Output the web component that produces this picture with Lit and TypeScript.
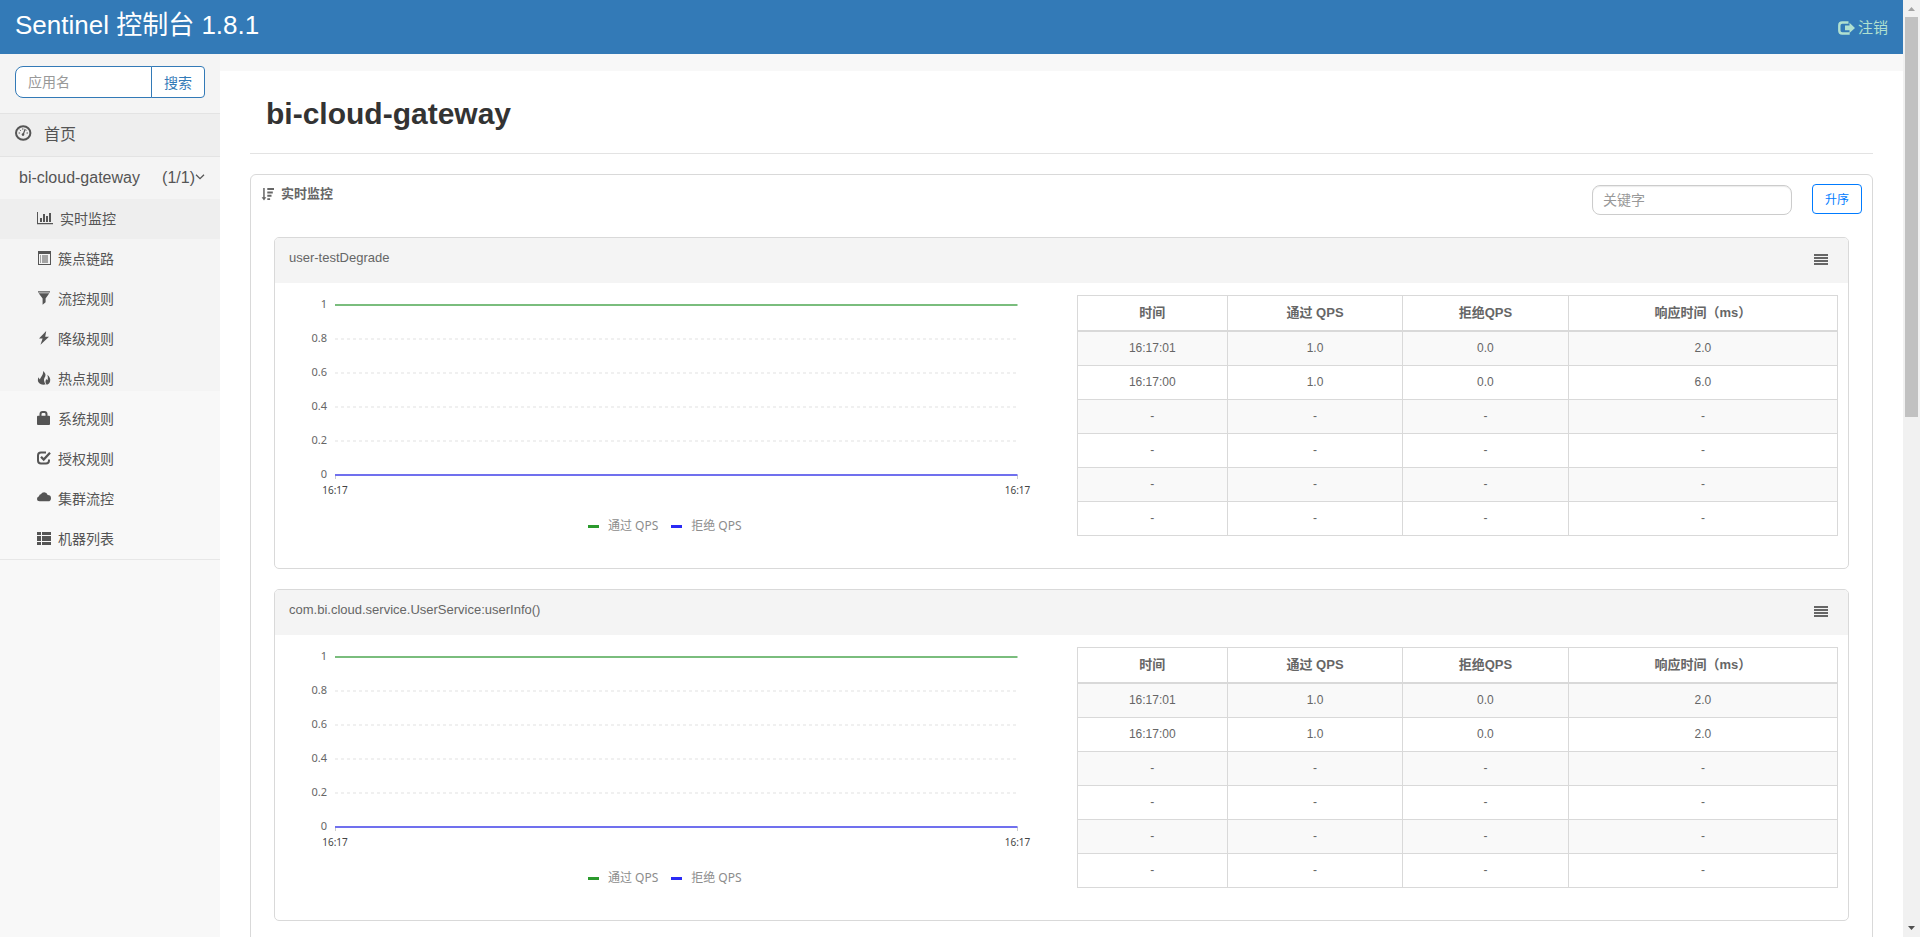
import { LitElement, html, svg, css } from "lit";
import { customElement, property } from "lit/decorators.js";
import { classMap } from "lit/directives/class-map.js";

interface Metric {
  time: string;
  pass: string;
  block: string;
  rt: string;
}

interface Resource {
  name: string;
  rows: Metric[];
}

const icons: Record<string, unknown> = {
  dashboard: html`<svg width="17" height="16" viewBox="0 0 17 16" fill="none" stroke="currentColor">
    <ellipse cx="8.2" cy="8" rx="7.2" ry="6.7" stroke-width="2"></ellipse>
    <path d="M8.300 9.200L10.200 4" stroke-width="1.200"></path>
    <circle cx="8" cy="9.600" r="1.300" fill="currentColor" stroke="none"></circle>
    <path d="M3.600 8h1.500M11.500 8h1.500M4.800 4.800l1 1M7.800 3.300v1.400M11.800 4.800l-.7.8" stroke-width="1"></path>
  </svg>`,
  stats: html`<svg width="16" height="13" viewBox="0 0 16 13" fill="currentColor">
    <path d="M0 0h1v11h15v1.200H0zM3 6h2v4H3zM6 2h2v8H6zM9 4h2v6H9zM12 1h2v9h-2z"></path>
  </svg>`,
  listAlt: html`<svg width="14" height="14" viewBox="0 0 14 14" fill="currentColor">
    <path fill-rule="evenodd" d="M1 0h13v14H1zM2 3v10h11V3z"></path>
    <path d="M3 4.500h1v1H3zM5 4.500h6v1H5zM3 6.500h1v1H3zM5 6.500h6v1H5zM3 8.500h1v1H3zM5 8.500h6v1H5zM3 10.500h1v1H3zM5 10.500h6v1H5z"></path>
  </svg>`,
  filter: html`<svg width="14" height="14" viewBox="0 0 14 14" fill="currentColor">
    <path d="M1 .3h12v1.200H1zM1.700 2.300h10.600L8.600 7.400v3.900l-3 2.500V7.400z"></path>
  </svg>`,
  flash: html`<svg width="14" height="14" viewBox="0 0 14 14" fill="currentColor">
    <path d="M9.200 0L2 7.400h3.600L3.500 13.800 12 5.800H8.200z"></path>
  </svg>`,
  fire: html`<svg width="14" height="14" viewBox="0 0 14 14" fill="currentColor">
    <path d="M6 0c2 1.600 3 3.400 2.300 5.200-.6 1.600-1.700 2.700-1.200 4.500.3 1.400.7 2.500 1.500 3.800C5 14 2.700 13.200 1.500 11.300.6 9.800.8 8 1.500 6.200c.3 1 .8 1.800 1.500 2.300C3.400 6 6.800 3.800 6 0z"></path>
    <path d="M10.300 3.800c2.500 2 3.400 4.200 2.800 6.400-.4 1.700-1.500 2.900-3.300 3.600-1.200-1.300-1.600-2.700-1.200-4 .2-.7.500-1.200.9-1.800.2.700.6 1.100 1 1.300.5-1.700.5-3.500-.2-5.500z"></path>
  </svg>`,
  lock: html`<svg width="14" height="14" viewBox="0 0 14 14" fill="currentColor">
    <path fill-rule="evenodd" d="M2.500 4.800V3C2.500 1.200 3.700 0 5.500 0h2C9.300 0 10.500 1.200 10.500 3v1.800H12q1 0 1 1V13q0 1-1 1H1q-1 0-1-1V5.800q0-1 1-1zM4.500 4.800h4V3.200Q8.500 2 7.300 2H5.700Q4.500 2 4.500 3.200z"></path>
  </svg>`,
  check: html`<svg width="14" height="14" viewBox="0 0 14 14" fill="none" stroke="currentColor" stroke-width="2">
    <path d="M9 1.500H4Q1 1.500 1 4.500V9.500Q1 12.500 4 12.500H9Q12 12.500 12 9.500V8.500"></path>
    <path d="M4 5.800l2.700 2.700L13 1.800" stroke-width="2.300"></path>
  </svg>`,
  cloud: html`<svg width="14" height="14" viewBox="0 0 14 14" fill="currentColor">
    <path d="M2.700 10.300Q0 10.300 0 7.800 0 5.800 2 5.200 2.200 3.400 3.800 3.300 5 1.200 7.200 1.200 9.800 1.200 10.700 4 14 4 14 7.200 14 10.300 11 10.300z"></path>
  </svg>`,
  thList: html`<svg width="14" height="14" viewBox="0 0 14 14" fill="currentColor">
    <path d="M0 1h4v3H0zM5 1h9v3H5zM0 5h4v5H0zM5 5h9v5H5zM0 11h4v3H0zM5 11h9v3H5z"></path>
  </svg>`,
  logout: html`<svg width="17" height="14" viewBox="0 0 17 14" fill="none" stroke="currentColor">
    <path d="M10.500 1.500H4.300Q1.300 1.500 1.300 4.500V9.500Q1.300 12.500 4.300 12.500H10.500V11.300" stroke-width="2.400"></path>
    <path d="M7 4.600h4.500V1.800L17 7l-5.500 5V9.200H7z" fill="currentColor" stroke="none"></path>
  </svg>`,
  sort: html`<svg width="14" height="14" viewBox="0 0 14 14" fill="currentColor">
    <path d="M2.200 1h1.500v9.200H5.300L3 13.500.6 10.200h1.600zM6.300 1H13v2H6.300zM6.300 4.500h5.500v1.900H6.300zM6.300 7.800h4.200v1.900H6.300zM6.300 11.200h2.800v1.900H6.300z"></path>
  </svg>`,
  menu: html`<svg width="14" height="11" viewBox="0 0 14 11" fill="currentColor">
    <path d="M0 0h14v2H0zM0 3h14v2H0zM0 6h14v2H0zM0 9h14v2H0z"></path>
  </svg>`,
  chevron: html`<svg width="10" height="9" viewBox="0 0 10 9" fill="none" stroke="currentColor" stroke-width="1.300">
    <path d="M1 .800l4 3.900L9 .800"></path>
  </svg>`,
};

@customElement("qps-chart")
class QpsChart extends LitElement {
  static styles = css`
    :host {
      display: block;
      font-family: "Noto Sans", "Noto Sans CJK SC", sans-serif;
    }
    .plot {
      padding: 12px 44px 0 60px;
    }
    .canvas {
      display: block;
      width: 100%;
      height: 221px;
      overflow: visible;
    }
    .grid {
      stroke: #f0f0f0;
      stroke-width: 2;
      stroke-dasharray: 3 3;
    }
    .tick {
      stroke: #ccc;
      stroke-width: 1;
    }
    .pass {
      stroke: #7abd7d;
      stroke-width: 2;
    }
    .block {
      stroke: #7070ee;
      stroke-width: 2;
    }
    .value {
      font-size: 11px;
      fill: #666;
      text-anchor: end;
    }
    .time {
      font-size: 10px;
      fill: #444;
      text-anchor: middle;
    }
    .legend {
      display: flex;
      justify-content: center;
      gap: 13px;
      padding-right: 7px;
      font-size: 12px;
      line-height: 20px;
      color: #8c8c8c;
    }
    .entry {
      display: flex;
      align-items: center;
      gap: 9px;
    }
    .mark {
      width: 11px;
      height: 3px;
      margin-top: 1px;
    }
    .mark-pass {
      background: #2b9a2d;
    }
    .mark-block {
      background: #2a2af5;
    }
  `;

  render() {
    const values = ["1", "0.8", "0.6", "0.4", "0.2", "0"];
    return html`
      <div class="plot">
        <svg class="canvas" role="img" aria-label="QPS">
          ${values.map((v, i) => svg`
            <text class="value" x="-8" y=${13 + i * 34}>${v}</text>
            ${i > 0 && i < 5 ? svg`<line class="grid" x1="0" x2="100%" y1=${10 + i * 34} y2=${10 + i * 34}></line>` : ""}
          `)}
          <line class="tick" x1="0.5" x2="0.5" y1="180" y2="184"></line>
          <line class="tick" x1="100%" x2="100%" y1="180" y2="184"></line>
          <line class="pass" x1="0" x2="100%" y1="10" y2="10"></line>
          <line class="block" x1="0" x2="100%" y1="180" y2="180"></line>
          <text class="time" x="0" y="199">16:17</text>
          <text class="time" x="100%" y="199">16:17</text>
        </svg>
      </div>
      <div class="legend">
        <span class="entry"><i class="mark mark-pass"></i>通过 QPS</span>
        <span class="entry"><i class="mark mark-block"></i>拒绝 QPS</span>
      </div>
    `;
  }
}

@customElement("metric-card")
class MetricCard extends LitElement {
  @property({ attribute: false }) resource!: Resource;

  static styles = css`
    :host {
      display: block;
      border: 1px solid #d9d9d9;
      border-radius: 5px;
      background: #fff;
      overflow: hidden;
    }
    .head {
      display: flex;
      align-items: center;
      justify-content: space-between;
      box-sizing: border-box;
      height: 45px;
      padding: 0 20px 2px 14px;
      background: #f4f4f4;
    }
    .name {
      margin: 0;
      padding-bottom: 4px;
      font-size: 13px;
      font-weight: 400;
    }
    .menu {
      display: flex;
      padding: 0;
      border: 0;
      background: none;
      color: #666;
    }
    .body {
      display: grid;
      grid-template-columns: 1fr 1fr;
      height: 285px;
    }
    .data {
      padding: 12px 10px 0 15px;
    }
    table {
      width: 100%;
      table-layout: fixed;
      border-collapse: collapse;
      text-align: center;
      font-size: 12px;
      line-height: 17px;
    }
    .c-time {
      width: 19.8%;
    }
    .c-pass {
      width: 23%;
    }
    .c-block {
      width: 21.8%;
    }
    th,
    td {
      padding: 8px;
      border: 1px solid #d9d9d9;
    }
    th {
      font-size: 13px;
      line-height: 18px;
      border-bottom-width: 2px;
    }
    tbody tr:nth-child(odd) {
      background: #f9f9f9;
    }
  `;

  render() {
    const empty: Metric = { time: "-", pass: "-", block: "-", rt: "-" };
    const rows = Array.from({ length: 6 }, (_, i) => this.resource.rows[i] ?? empty);
    return html`
      <div class="head">
        <h2 class="name">${this.resource.name}</h2>
        <button class="menu" type="button" aria-label="菜单">${icons.menu}</button>
      </div>
      <div class="body">
        <qps-chart></qps-chart>
        <div class="data">
          <table>
            <colgroup><col class="c-time" /><col class="c-pass" /><col class="c-block" /><col /></colgroup>
            <thead>
              <tr><th>时间</th><th>通过 QPS</th><th>拒绝QPS</th><th>响应时间（ms）</th></tr>
            </thead>
            <tbody>
              ${rows.map((r) => html`<tr><td>${r.time}</td><td>${r.pass}</td><td>${r.block}</td><td>${r.rt}</td></tr>`)}
            </tbody>
          </table>
        </div>
      </div>
    `;
  }
}

@customElement("app-root")
class AppRoot extends LitElement {
  static styles = css`
    :host {
      display: grid;
      grid-template-columns: 1fr 17px;
      height: 100vh;
      overflow: hidden;
      background: #f8f8f8;
      color: #666;
      font-family: "Liberation Sans", "Noto Sans CJK SC", Arial, sans-serif;
      font-size: 14px;
    }
    * {
      box-sizing: border-box;
    }
    svg {
      display: block;
      flex: none;
    }
    a {
      color: inherit;
      text-decoration: none;
    }
    button,
    input {
      font-family: inherit;
      outline: none;
    }
    input::placeholder {
      color: #999;
      opacity: 1;
    }
    .page {
      min-width: 0;
      overflow-y: auto;
      scrollbar-width: none;
    }
    .top {
      display: flex;
      align-items: center;
      justify-content: space-between;
      height: 54px;
      padding: 0 15px;
      background: #337ab7;
    }
    .brand {
      padding-bottom: 4px;
      color: #fff;
      font-size: 26px;
      line-height: 32px;
    }
    .logout {
      display: flex;
      align-items: center;
      gap: 3px;
      padding-top: 1px;
      font-size: 15px;
      line-height: 20px;
      color: #b0e0d0;
    }
    .columns {
      display: grid;
      grid-template-columns: 220px 1fr;
      align-items: start;
    }
    .side {
      color: #555;
      border-bottom: 1px solid #e7e7e7;
      background: linear-gradient(#f4f4f4 337px, #f8f8f8 337px);
    }
    .search {
      display: flex;
      padding: 12px 15px 15px;
    }
    .search-input {
      width: 137px;
      height: 32px;
      padding: 0 12px;
      border: 1px solid #337ab7;
      border-radius: 8px 0 0 8px;
      background: #fff;
      font-size: 14px;
    }
    .search-button {
      flex: 1;
      height: 32px;
      margin-left: -1px;
      padding: 0;
      border: 1px solid #337ab7;
      border-radius: 0 4px 4px 0;
      background: #fff;
      color: #337ab7;
      font-size: 14px;
    }
    .home {
      display: flex;
      align-items: center;
      gap: 12px;
      height: 44px;
      padding: 0 15px 4px;
      border-top: 1px solid #e3e3e3;
      border-bottom: 1px solid #e3e3e3;
      background: #eee;
      font-size: 16px;
    }
    .app {
      display: flex;
      align-items: center;
      height: 42px;
      padding: 0 15px 0 19px;
      font-size: 16px;
    }
    .app-name {
      flex: 1;
    }
    .item {
      display: flex;
      align-items: center;
      gap: 7px;
      height: 40px;
      padding: 0 0 2px 37px;
    }
    .active {
      background: #eee;
    }
    .main {
      margin-top: 17px;
      padding: 0 30px 30px;
      background: #fff;
    }
    .title {
      margin: 0 0 20px;
      padding: 26px 16px 22px;
      border-bottom: 1px solid #e3e3e3;
      color: #333;
      font-size: 30px;
      line-height: 34px;
    }
    .panel {
      padding: 8px 10px 40px;
      border: 1px solid #d9d9d9;
      border-radius: 6px;
    }
    .panel-head {
      display: flex;
      align-items: center;
      gap: 20px;
    }
    .panel-title {
      display: flex;
      flex: 1;
      align-items: center;
      gap: 6px;
      margin: 0;
      padding-bottom: 10px;
      font-size: 13px;
      line-height: 18px;
    }
    .keyword {
      width: 200px;
      height: 30px;
      padding: 0 10px;
      margin-top: 2px;
      border: 1px solid #ccc;
      border-radius: 8px;
      box-shadow: inset 0 1px 1px rgba(0, 0, 0, 0.08);
      background: #fff;
      font-size: 14px;
    }
    .order {
      width: 50px;
      height: 30px;
      padding: 0 0 2px;
      border: 1px solid #007bff;
      border-radius: 4px;
      background: #fff;
      color: #007bff;
      font-size: 12px;
    }
    .cards {
      display: grid;
      gap: 20px;
      padding: 22px 13px 0;
    }
    .scroll {
      display: flex;
      flex-direction: column;
      align-items: center;
      padding: 7px 0;
      background: #f1f1f1;
    }
    .arrow {
      width: 7px;
      height: 4px;
      flex: none;
    }
    .arrow-up {
      fill: #a3a3a3;
    }
    .arrow-down {
      fill: #505050;
    }
    .track {
      display: flex;
      flex: 1;
      margin: 6px 0;
    }
    .thumb {
      width: 13px;
      height: 44.3%;
      background: #c1c1c1;
    }
  `;

  private items = [
    ["stats", "实时监控"],
    ["listAlt", "簇点链路"],
    ["filter", "流控规则"],
    ["flash", "降级规则"],
    ["fire", "热点规则"],
    ["lock", "系统规则"],
    ["check", "授权规则"],
    ["cloud", "集群流控"],
    ["thList", "机器列表"],
  ];

  private resources: Resource[] = [
    {
      name: "user-testDegrade",
      rows: [
        { time: "16:17:01", pass: "1.0", block: "0.0", rt: "2.0" },
        { time: "16:17:00", pass: "1.0", block: "0.0", rt: "6.0" },
      ],
    },
    {
      name: "com.bi.cloud.service.UserService:userInfo()",
      rows: [
        { time: "16:17:01", pass: "1.0", block: "0.0", rt: "2.0" },
        { time: "16:17:00", pass: "1.0", block: "0.0", rt: "2.0" },
      ],
    },
  ];

  render() {
    return html`
      <div class="page">
        <header class="top">
          <a class="brand" href="#">Sentinel 控制台 1.8.1</a>
          <a class="logout" href="#logout">${icons.logout}注销</a>
        </header>
        <div class="columns">
          <nav class="side">
            <div class="search">
              <input class="search-input" type="text" placeholder="应用名" aria-label="应用名" />
              <button class="search-button" type="button">搜索</button>
            </div>
            <a class="home" href="#home">${icons.dashboard}首页</a>
            <a class="app" href="#app"><span class="app-name">bi-cloud-gateway</span>(1/1)${icons.chevron}</a>
            ${this.items.map(([icon, label], i) => html`
              <a class=${classMap({ item: true, active: i === 0 })} href="#${icon}">${icons[icon]}${label}</a>
            `)}
          </nav>
          <main class="main">
            <h1 class="title">bi-cloud-gateway</h1>
            <section class="panel">
              <div class="panel-head">
                <h2 class="panel-title">${icons.sort}实时监控</h2>
                <input class="keyword" type="text" placeholder="关键字" aria-label="关键字" />
                <button class="order" type="button">升序</button>
              </div>
              <div class="cards">
                ${this.resources.map((r) => html`<metric-card .resource=${r}></metric-card>`)}
              </div>
            </section>
          </main>
        </div>
      </div>
      <div class="scroll" aria-hidden="true">
        <svg class="arrow arrow-up" viewBox="0 0 7 4"><path d="M0 4L3.500 0 7 4z"></path></svg>
        <div class="track"><div class="thumb"></div></div>
        <svg class="arrow arrow-down" viewBox="0 0 7 4"><path d="M0 0h7L3.500 4z"></path></svg>
      </div>
    `;
  }
}
